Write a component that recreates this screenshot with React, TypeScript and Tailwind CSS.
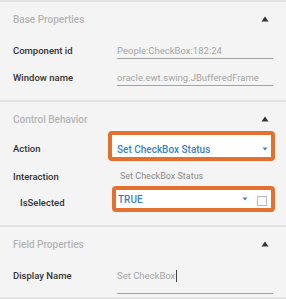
import React from 'react';

const Caret = () => (
  <svg width="8" height="6" viewBox="0 0 8 6" className="mr-[1px]">
    <path d="M4 0.5 L7.5 5.5 L0.5 5.5 Z" fill="#333" />
  </svg>
);

const Chevron = () => (
  <svg width="6" height="4" viewBox="0 0 6 4">
    <path d="M0.5 0.5 L5.5 0.5 L3 3.5 Z" fill="#3b82c4" />
  </svg>
);

const SectionHeader = ({ title, className = '' }: { title: string; className?: string }) => (
  <div className={`flex items-center justify-between pl-[13px] pr-[16px] ${className}`}>
    <span className="text-[10px] font-medium text-[#b5b5b5]">{title}</span>
    <Caret />
  </div>
);

const FieldRow = ({ label, value }: { label: string; value: string }) => (
  <div className="flex items-center h-[27px] pl-[13px] pr-[13px]">
    <span className="w-[104px] shrink-0 text-[9.5px] font-medium text-[#333]">{label}</span>
    <div className="flex-1 h-[14px] box-content flex items-center border-b border-[#a3a3a3] text-[9.5px] text-[#a5a5a5] leading-[14px]">
      {value}
    </div>
  </div>
);

export default function App() {
  return (
    <div className="w-[286px] h-[299px] bg-[#f4f4f4] overflow-hidden" style={{ fontFamily: 'Roboto, "Noto Sans", sans-serif' }}>
      <section className="border-t-2 border-[#e3e3e3] pb-[8px]">
        <SectionHeader title="Base Properties" className="h-[34px]" />
        <div className="pt-[2px]">
          <FieldRow label="Component id" value="People:CheckBox:182:24" />
          <FieldRow label="Window name" value="oracle.ewt.swing.JBufferedFrame" />
        </div>
      </section>

      <section className="border-t-2 border-[#e3e3e3] pb-[13px]">
        <SectionHeader title="Control Behavior" className="h-[29px] pt-[5px]" />

        <div className="flex items-center h-[30px] pl-[13px] pr-[11px]">
          <span className="w-[95px] shrink-0 pt-[7px] text-[9.5px] font-medium text-[#333]">Action</span>
          <div className="flex-1 h-[30px] rounded-[4px] border-4 border-[#e3702f] bg-white flex items-center justify-between pt-[6px] pl-[5px] pr-[3px]">
            <span className="text-[10px] font-medium text-[#3b82c4]">Set CheckBox Status</span>
            <Chevron />
          </div>
        </div>

        <div className="flex items-center h-[25px] pt-[7px] pl-[13px]">
          <span className="w-[107px] shrink-0 text-[9.5px] font-medium text-[#333]">Interaction</span>
          <span className="text-[9px] text-[#8a8a8a]">Set CheckBox Status</span>
        </div>

        <div className="flex items-center h-[26px] pl-[20px] pr-[11px]">
          <span className="w-[92px] shrink-0 pt-[8px] text-[9.5px] font-medium text-[#333]">IsSelected</span>
          <div className="flex-1 h-[26px] rounded-[4px] border-4 border-[#e3702f] bg-white flex items-center pl-[2px] pr-[4px]">
            <span className="flex-1 text-[10px] font-medium text-[#3b82c4]">TRUE</span>
            <Chevron />
            <span className="ml-[9px] mt-[3px] w-[10px] h-[10px] border border-[#b8b8b8] bg-white" />
          </div>
        </div>
      </section>

      <section className="border-t-2 border-[#e3e3e3] pb-[3px]">
        <SectionHeader title="Field Properties" className="h-[34px]" />
        <div className="flex items-start pt-[8px] pl-[13px] pr-[13px]">
          <span className="w-[104px] shrink-0 leading-[14px] text-[9.5px] font-medium text-[#333]">Display Name</span>
          <div className="flex-1 flex items-center h-[14px] box-content pb-[10px] border-b border-[#a3a3a3] text-[9.5px] text-[#a5a5a5] leading-[14px]">
            Set CheckBox
            <span className="ml-[1px] h-[12px] border-l border-[#444]" />
          </div>
        </div>
      </section>
      <div className="border-t-2 border-[#e3e3e3]" />
    </div>
  );
}
